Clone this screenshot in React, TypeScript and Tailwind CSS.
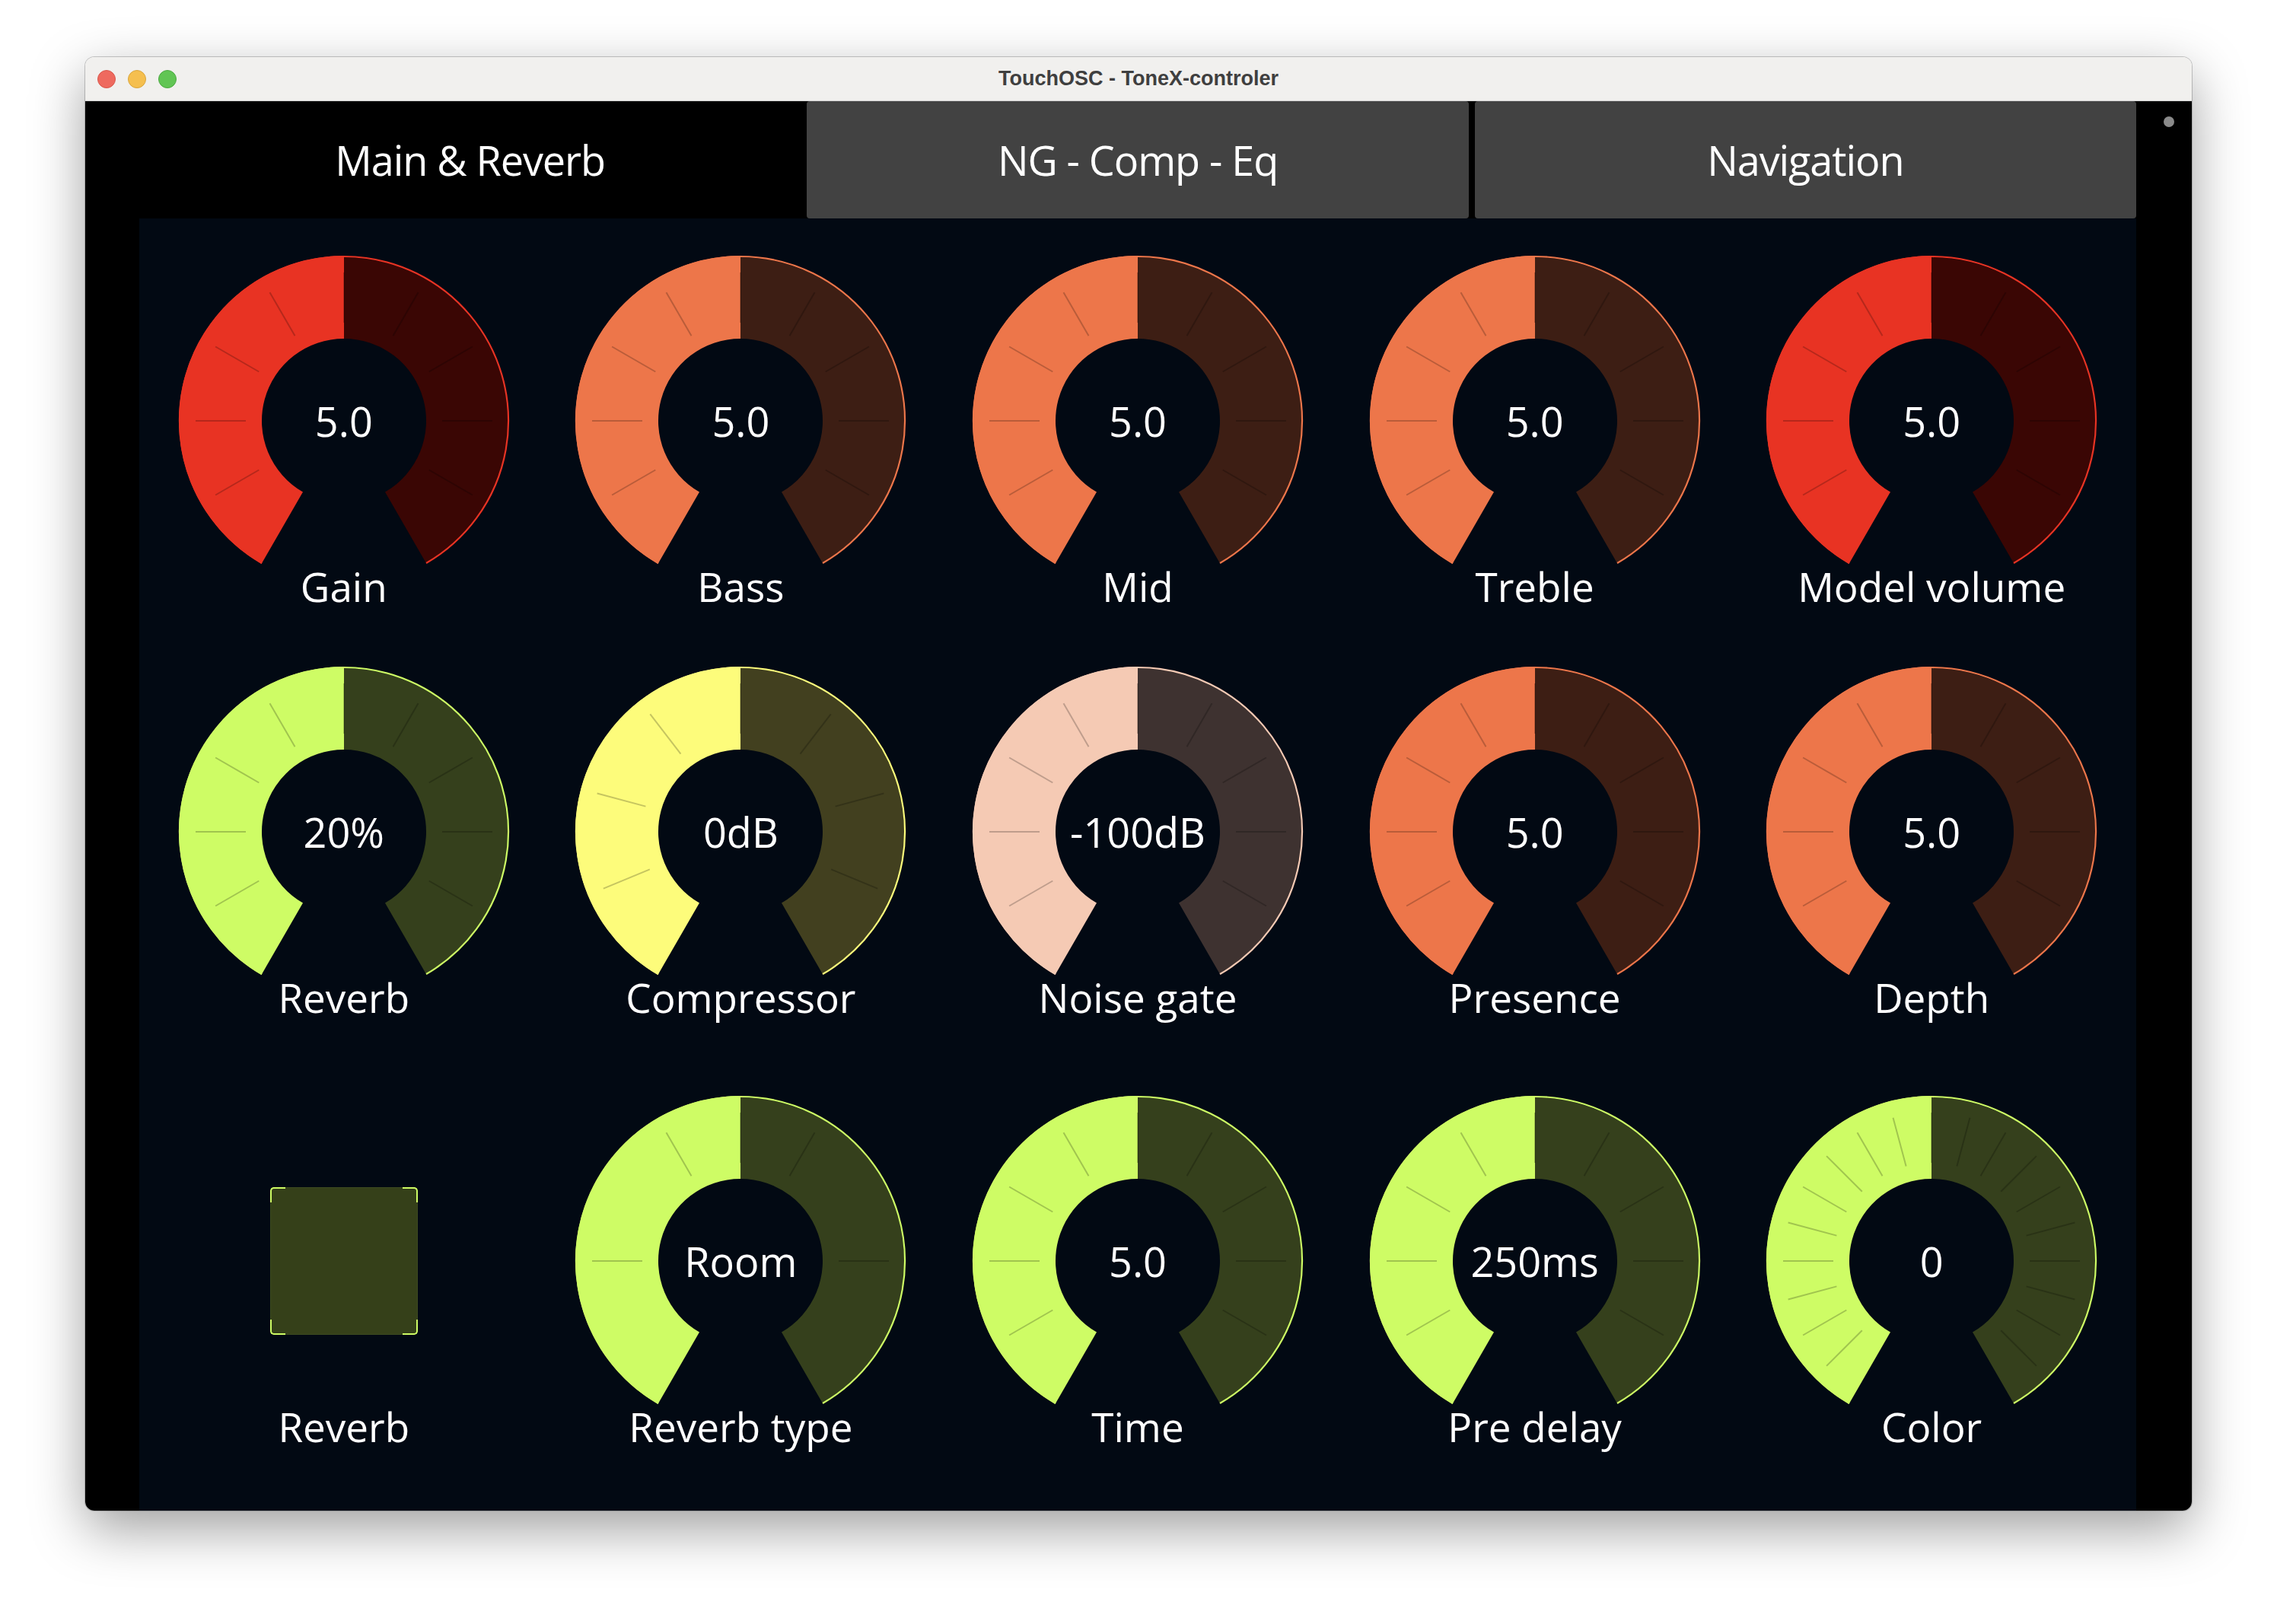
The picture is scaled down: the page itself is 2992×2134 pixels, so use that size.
const C = 220;

type KnobDef = {
    label: string;
    value: string;
    color: string;
    dark: string;
    ticks: number[];
};

const steps = (step: number, max: number) => {
    const out: number[] = [];
    for (let a = -max; a <= max + 0.01; a += step) out.push(a);
    return out;
};

const pt = (r: number, deg: number) => {
    const a = (deg * Math.PI) / 180;
    return [C + r * Math.sin(a), C - r * Math.cos(a)];
};

const sector = (a0: number, a1: number, ro: number, ri: number) => {
    const large = a1 - a0 > 180 ? 1 : 0;
    const [x0, y0] = pt(ro, a0);
    const [x1, y1] = pt(ro, a1);
    const [x2, y2] = pt(ri, a1);
    const [x3, y3] = pt(ri, a0);
    return `M${x0} ${y0} A${ro} ${ro} 0 ${large} 1 ${x1} ${y1} L${x2} ${y2} A${ri} ${ri} 0 ${large} 0 ${x3} ${y3} Z`;
};

const RED = { color: '#e83323', dark: '#3a0604' };
const ORANGE = { color: '#ed764a', dark: '#3d1e14' };
const GREEN = { color: '#cefc65', dark: '#35401c' };
const YELLOW = { color: '#fdfc7b', dark: '#42401f' };
const PEACH = { color: '#f5cab4', dark: '#3e3230' };

const t30 = steps(30, 120);

const rows: (KnobDef | null)[][] = [
    [
        { label: 'Gain', value: '5.0', ...RED, ticks: t30 },
        { label: 'Bass', value: '5.0', ...ORANGE, ticks: t30 },
        { label: 'Mid', value: '5.0', ...ORANGE, ticks: t30 },
        { label: 'Treble', value: '5.0', ...ORANGE, ticks: t30 },
        { label: 'Model volume', value: '5.0', ...RED, ticks: t30 },
    ],
    [
        { label: 'Reverb', value: '20%', ...GREEN, ticks: t30 },
        { label: 'Compressor', value: '0dB', ...YELLOW, ticks: steps(37.5, 112.5) },
        { label: 'Noise gate', value: '-100dB', ...PEACH, ticks: t30 },
        { label: 'Presence', value: '5.0', ...ORANGE, ticks: t30 },
        { label: 'Depth', value: '5.0', ...ORANGE, ticks: t30 },
    ],
    [
        null,
        { label: 'Reverb type', value: 'Room', ...GREEN, ticks: [-90, -30, 0, 30, 90] },
        { label: 'Time', value: '5.0', ...GREEN, ticks: t30 },
        { label: 'Pre delay', value: '250ms', ...GREEN, ticks: t30 },
        { label: 'Color', value: '0', ...GREEN, ticks: steps(15, 135) },
    ],
];

function Knob({ knob }: { knob: KnobDef }) {
    const [ox0, oy0] = pt(216, -150);
    const [ox1, oy1] = pt(216, 150);
    return (
        <div className="flex flex-col items-center">
            <div className="relative w-[440px] h-[440px]">
                <svg width="440" height="440" viewBox="0 0 440 440">
                    <path d={sector(0, 150, 215, 108)} fill={knob.dark} />
                    <path d={sector(-150, 0, 217, 108)} fill={knob.color} />
                    <path
                        d={`M${ox0} ${oy0} A216 216 0 1 1 ${ox1} ${oy1}`}
                        fill="none"
                        stroke={knob.color}
                        strokeWidth="2.2"
                    />
                    {knob.ticks.map((a) => {
                        const [x1, y1] = pt(129, a);
                        const [x2, y2] = pt(195, a);
                        return (
                            <line
                                key={a}
                                x1={x1}
                                y1={y1}
                                x2={x2}
                                y2={y2}
                                stroke="rgba(0,0,0,0.22)"
                                strokeWidth="2"
                            />
                        );
                    })}
                </svg>
                <div className="absolute inset-0 flex items-center justify-center text-white text-[54px] leading-[54px]">
                    {knob.value}
                </div>
            </div>
            <div className="mt-[-29px] text-white text-[53px] leading-[53px] whitespace-nowrap">{knob.label}</div>
        </div>
    );
}

function ReverbToggle() {
    return (
        <div className="flex flex-col items-center">
            <div className="w-[440px] h-[440px] flex items-center justify-center">
                <div className="relative w-[194px] h-[194px] bg-[#354019] rounded-[5px] border border-[#3c4a20]">
                    <div className="absolute -top-px -left-px w-[20px] h-[20px] border-t-2 border-l-2 border-[#cdfc64] rounded-tl-[5px]" />
                    <div className="absolute -top-px -right-px w-[20px] h-[20px] border-t-2 border-r-2 border-[#cdfc64] rounded-tr-[5px]" />
                    <div className="absolute -bottom-px -left-px w-[20px] h-[20px] border-b-2 border-l-2 border-[#cdfc64] rounded-bl-[5px]" />
                    <div className="absolute -bottom-px -right-px w-[20px] h-[20px] border-b-2 border-r-2 border-[#cdfc64] rounded-br-[5px]" />
                </div>
            </div>
            <div className="mt-[-29px] text-white text-[53px] leading-[53px]">Reverb</div>
        </div>
    );
}

export default function App() {
    const rowHeights = ['h-[540px]', 'h-[564px]', 'flex-1'];
    return (
        <div
            className="min-h-[2134px] w-full bg-white flex justify-center pt-[75px]"
            style={{ fontFamily: '"Open Sans", "Noto Sans", sans-serif' }}
        >
            <div className="w-[2768px] h-[1910px] rounded-[12px] overflow-hidden flex flex-col shadow-[0_24px_70px_rgba(0,0,0,0.38)] ring-1 ring-black/20">
                {/* Title bar */}
                <div className="h-[58px] bg-[#f1f0ee] border-b border-[#cfcfcf] grid grid-cols-[1fr_auto_1fr] items-center">
                    <div className="flex items-center gap-[16px] pl-[16px]">
                        <div className="w-[24px] h-[24px] rounded-full bg-[#ee6a5f] border border-[#d9574c]" />
                        <div className="w-[24px] h-[24px] rounded-full bg-[#f5bf4f] border border-[#d9a53c]" />
                        <div className="w-[24px] h-[24px] rounded-full bg-[#61c554] border border-[#4ca942]" />
                    </div>
                    <div
                        className="text-[27px] font-bold text-[#3f3f3f]"
                        style={{ fontFamily: '"Liberation Sans", Arial, sans-serif' }}
                    >
                        TouchOSC - ToneX-controler
                    </div>
                    <div />
                </div>

                {/* Body */}
                <div className="flex-1 flex bg-black">
                    <div className="w-[71px]" />
                    <div className="w-[2624px] flex flex-col">
                        <div className="h-[154px] grid grid-cols-3 gap-2 text-white text-[54px] tracking-[-0.02em]">
                            <div className="flex items-center justify-center bg-black">Main &amp; Reverb</div>
                            <div className="flex items-center justify-center bg-[#424242] rounded-[4px]">
                                NG - Comp - Eq
                            </div>
                            <div className="flex items-center justify-center bg-[#424242] rounded-[4px]">
                                Navigation
                            </div>
                        </div>
                        <div className="flex-1 bg-[#020913] flex flex-col pt-[46px] px-[8px]">
                            {rows.map((row, ri) => (
                                <div key={ri} className={`grid grid-cols-5 ${rowHeights[ri]}`}>
                                    {row.map((k, ci) =>
                                        k ? <Knob key={ci} knob={k} /> : <ReverbToggle key={ci} />
                                    )}
                                </div>
                            ))}
                        </div>
                    </div>
                    <div className="flex-1 pl-[36px] pt-[20px]">
                        <div className="w-[14px] h-[14px] rounded-full bg-[#8a8a8a]" />
                    </div>
                </div>
            </div>
        </div>
    );
}
